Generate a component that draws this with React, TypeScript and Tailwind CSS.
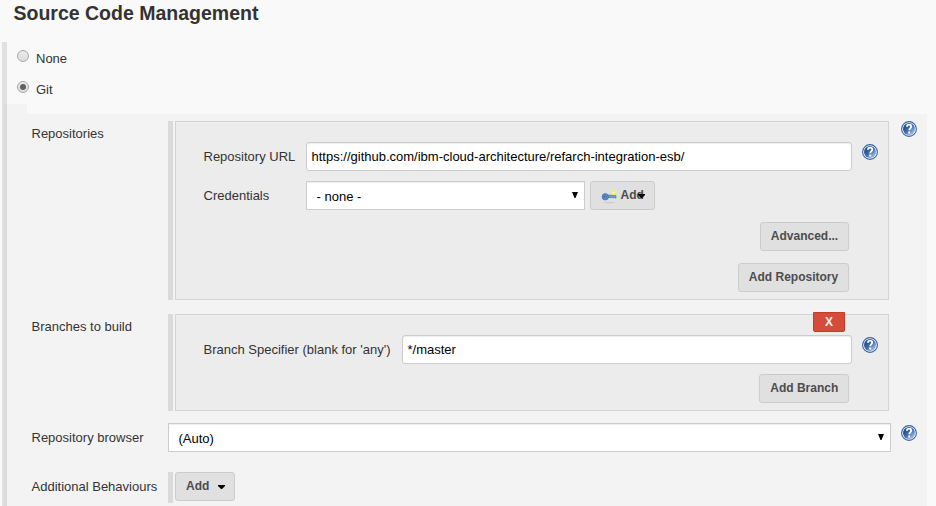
import type { ReactNode } from 'react';

function HelpIcon({ className = '' }: { className?: string }) {
  return (
    <svg className={`h-4 w-4 shrink-0 ${className}`} viewBox="0 0 16 16">
      <defs>
        <linearGradient id="help" x1="0" y1="0" x2="1" y2="1">
          <stop offset="0.15" stopColor="#204a87" />
          <stop offset="0.5" stopColor="#3f6cab" />
          <stop offset="0.85" stopColor="#9dbbe0" />
        </linearGradient>
      </defs>
      <circle cx="8" cy="8" r="7.400" fill="#f4f7fb" stroke="#3663a0" strokeWidth="1.100" />
      <circle cx="8" cy="8" r="6" fill="url(#help)" />
      <path d="M5.900 5.700C6 4.300 6.900 3.700 8 3.700c1.400 0 2.200.8 2.200 1.900 0 1.600-2 1.900-2 3.700" fill="none" stroke="#fff" strokeWidth="1.800" />
      <rect x="7.200" y="10.500" width="2" height="2" fill="#fff" />
    </svg>
  );
}

function KeyIcon() {
  return (
    <svg className="h-4 w-4 shrink-0" viewBox="0 0 16 16">
      <ellipse cx="8.500" cy="14.500" rx="6" ry="0.800" fill="#cccccc" />
      <path d="M7 7.200h7.500l.5 1v1.800h-1l-.5-.5-1 .5-1-.5H7z" fill="#6d9bd2" stroke="#4676b2" strokeWidth="0.700" />
      <circle cx="4.300" cy="8.800" r="3.200" fill="#5588c7" stroke="#4474b0" strokeWidth="0.700" />
      <circle cx="3.300" cy="8.600" r="0.900" fill="#3c6ba8" />
      <circle cx="12.500" cy="4.500" r="2.600" fill="#fbee4c" opacity="0.850" />
      <circle cx="12.500" cy="4.500" r="1.100" fill="#fffbc0" />
    </svg>
  );
}

function Radio({ checked = false }: { checked?: boolean }) {
  return (
    <svg className="h-3 w-3" viewBox="0 0 12 12">
      <defs>
        <linearGradient id="radio" x1="0" y1="0" x2="0" y2="1">
          <stop offset="0" stopColor="#ededed" />
          <stop offset="1" stopColor="#dcdcdc" />
        </linearGradient>
      </defs>
      <circle cx="6" cy="6" r="5.500" fill="url(#radio)" stroke="#a8a8a8" />
      {checked && <circle cx="6" cy="6" r="3" fill="#606060" />}
    </svg>
  );
}

function Button({ children, className = '' }: { children: ReactNode; className?: string }) {
  return (
    <button className={`flex h-[29px] shrink-0 items-center rounded-[3px] border border-[#cccccc] bg-[#e0e0e0] text-[12px] leading-[17px] font-bold text-[#4d4d4d] ${className}`}>
      {children}
    </button>
  );
}

function TextBox({ children }: { children: string }) {
  return (
    <div className="flex h-[29px] w-0 grow items-center rounded-[3px] border border-[#cccccc] bg-white px-[4.5px] text-black shadow-[inset_0_1px_1px_rgba(0,0,0,0.075)]">
      {children}
    </div>
  );
}

function SelectBox({ children, className }: { children: string; className: string }) {
  return (
    <div className={`flex h-[29px] shrink-0 items-center justify-between border border-[#cccccc] bg-white pr-1.5 pl-[9.5px] text-black shadow-[inset_0_1px_1px_rgba(0,0,0,0.075)] ${className}`}>
      <span className="pt-px">{children}</span>
      <svg className="mb-px h-[6px] w-[6px]" viewBox="0 0 6 6">
        <path d="M0 0h6L3.500 6h-1z" fill="#000" />
      </svg>
    </div>
  );
}

function Caret({ className }: { className: string }) {
  return (
    <svg className={`h-1 w-[7px] shrink-0 ${className}`} viewBox="0 0 7 4">
      <path d="M0 0h7v1L4 4H3L0 1z" fill="#000" />
    </svg>
  );
}

function Row({ label, className, labelClass = 'pt-[5px]', children }: { label: string; className: string; labelClass?: string; children: ReactNode }) {
  return (
    <div className={`flex items-start ${className}`}>
      <div className={`w-[137px] shrink-0 pl-[0.5px] leading-[15px] whitespace-nowrap ${labelClass}`}>{label}</div>
      {children}
    </div>
  );
}

function Panel({ children, className }: { children: ReactNode; className: string }) {
  return (
    <>
      <div className={`mr-0.5 w-[5px] shrink-0 bg-[#dadada] ${className}`} />
      <div className={`w-[714px] shrink-0 border border-[#d4d4d4] bg-[#ececec] pl-[27px] ${className}`}>{children}</div>
    </>
  );
}

export default function App() {
  return (
    <main className="h-[506px] w-[936px] overflow-hidden bg-[#f9f9f9] font-['Liberation_Sans',Arial,sans-serif] text-[13px] leading-[15px] text-[#333333]">
      <h1 className="h-[42px] pt-px pl-[13.5px] text-[19.5px] leading-6 font-bold">Source Code Management</h1>
      <section className="ml-0.5 h-[464px] border-l-[5px] border-[#e1e1e1]">
        <div className="h-[62px]">
          <label className="flex h-[31px] items-start pt-2 pl-2.5">
            <Radio />
            <span className="ml-[7px] pt-px">None</span>
          </label>
          <label className="flex h-[31px] items-start pt-2 pl-2.5">
            <Radio checked />
            <span className="ml-[7px] pt-px">Git</span>
          </label>
        </div>
        <div className="-ml-[3px] h-2.5 w-[23px] bg-black/[0.025]" />
        <div className="-ml-[3px] h-[392px] w-[923px] bg-black/[0.025] pt-[7px] pl-[27px]">
          <Row label="Repositories" className="h-[193px]">
            <Panel className="h-[179px]">
              <div className="mt-5 flex w-[675px] items-start">
                <span className="w-[103px] shrink-0 pt-[7px] pl-[0.5px]">Repository URL</span>
                <TextBox>https://github.com/ibm-cloud-architecture/refarch-integration-esb/</TextBox>
                <HelpIcon className="mt-0.5 ml-2.5" />
              </div>
              <div className="mt-2.5 flex items-start">
                <span className="w-[103px] pt-[7px] pl-[0.5px]">Credentials</span>
                <SelectBox className="w-[279px]">- none -</SelectBox>
                <Button className="ml-[5px] w-[65px] pl-2.5">
                  <KeyIcon />
                  <span className="ml-[3.5px]">Add</span>
                  <Caret className="-ml-1.5" />
                </Button>
              </div>
              <div className="mt-3 flex w-[646px] flex-col items-end gap-3">
                <Button className="w-[89px] justify-center">Advanced...</Button>
                <Button className="w-[111px] justify-center">Add Repository</Button>
              </div>
            </Panel>
            <HelpIcon className="ml-3" />
          </Row>
          <Row label="Branches to build" className="h-[109px]">
            <Panel className="h-[97px]">
              <button className="-mt-[3px] ml-[610px] block h-5 w-8 rounded-b-[2px] border border-[#c23b2c] bg-[#d54c3b] text-[12px] leading-[18px] font-bold text-[#f2f2f2]">X</button>
              <div className="mt-[3px] flex w-[675px] items-start">
                <span className="w-[199px] shrink-0 pt-[7px] pl-[0.5px]">Branch Specifier (blank for 'any')</span>
                <TextBox>*/master</TextBox>
                <HelpIcon className="mt-0.5 ml-2.5" />
              </div>
              <div className="mt-2.5 flex w-[646px] justify-end">
                <Button className="w-[90px] justify-center pl-[0.5px]">Add Branch</Button>
              </div>
            </Panel>
          </Row>
          <Row label="Repository browser" className="h-[49px]" labelClass="pt-[7px]">
            <SelectBox className="w-[723px]">(Auto)</SelectBox>
            <HelpIcon className="mt-0.5 ml-2.5" />
          </Row>
          <Row label="Additional Behaviours" className="h-[31px]" labelClass="pt-[7px]">
            <div className="mr-0.5 h-[31px] w-[5px] bg-[#dadada]" />
            <Button className="w-[60px] pl-2.5">
              Add
              <Caret className="mt-px ml-[9px]" />
            </Button>
          </Row>
        </div>
      </section>
    </main>
  );
}
